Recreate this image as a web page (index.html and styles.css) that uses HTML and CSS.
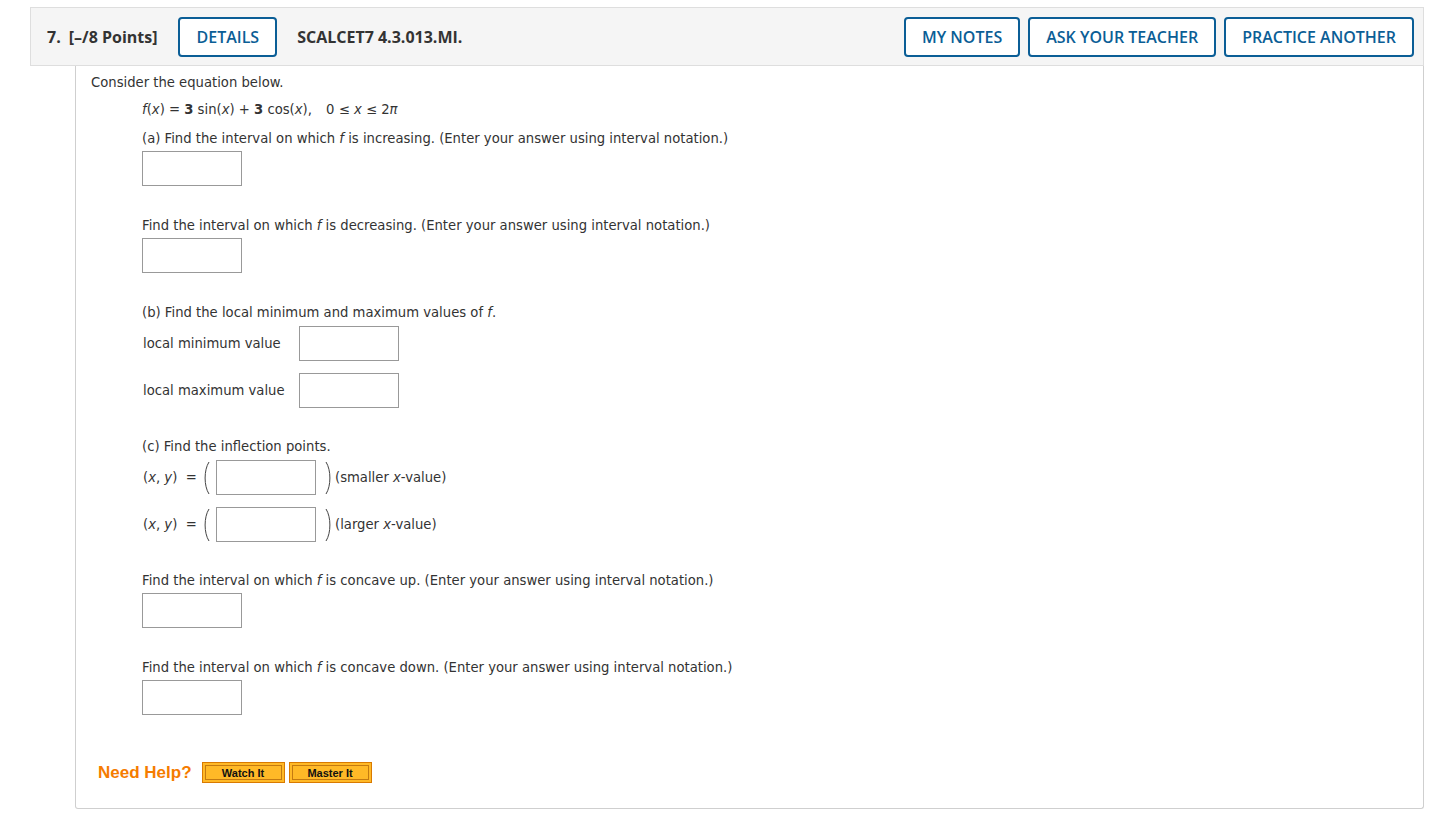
FILE: index.html
```html
<!DOCTYPE html>
<html>
<head>
<meta charset="utf-8">
<link rel="stylesheet" href="styles.css">
</head>
<body>
<div class="page">
  <div class="qhead">
    <div class="qleft">
      <span class="qnum">7.</span>
      <span class="qpts">[–/8 Points]</span>
      <button class="hbtn">DETAILS</button>
      <span class="qcode">SCALCET7 4.3.013.MI.</span>
    </div>
    <div class="qright">
      <button class="hbtn">MY NOTES</button>
      <button class="hbtn">ASK YOUR TEACHER</button>
      <button class="hbtn">PRACTICE ANOTHER</button>
    </div>
  </div>
  <div class="qbody">
    <p class="line first">Consider the equation below.</p>
    <div class="indent">
      <p class="line eq"><i>f</i>(<i>x</i>) = <b>3</b> sin(<i>x</i>) + <b>3</b> cos(<i>x</i>), <span class="range">0 ≤ <i>x</i> ≤ 2<i>π</i></span></p>
      <p class="line sec">(a) Find the interval on which <i>f</i> is increasing. (Enter your answer using interval notation.)</p>
      <div class="ans"></div>
      <p class="line gap">Find the interval on which <i>f</i> is decreasing. (Enter your answer using interval notation.)</p>
      <div class="ans"></div>
      <p class="line gap">(b) Find the local minimum and maximum values of <i>f</i>.</p>
      <div class="row r1"><span class="lbl">local minimum value</span><div class="ans"></div></div>
      <div class="row r2"><span class="lbl">local maximum value</span><div class="ans"></div></div>
      <p class="line gap2">(c) Find the inflection points.</p>
      <div class="row r1">
        <span class="xy">(<i>x</i>, <i>y</i>)&nbsp; =</span>
        <svg class="paren lp" width="7" height="34" viewBox="0 0 7 34"><path d="M6 1 C0.8 9 0.8 25 6 33" fill="none" stroke="#444" stroke-width="1"/></svg>
        <div class="ans"></div>
        <svg class="paren rp" width="7" height="34" viewBox="0 0 7 34"><path d="M1 1 C6.2 9 6.2 25 1 33" fill="none" stroke="#444" stroke-width="1"/></svg>
        <span class="note">(smaller <i>x</i>-value)</span>
      </div>
      <div class="row r2">
        <span class="xy">(<i>x</i>, <i>y</i>)&nbsp; =</span>
        <svg class="paren lp" width="7" height="34" viewBox="0 0 7 34"><path d="M6 1 C0.8 9 0.8 25 6 33" fill="none" stroke="#444" stroke-width="1"/></svg>
        <div class="ans"></div>
        <svg class="paren rp" width="7" height="34" viewBox="0 0 7 34"><path d="M1 1 C6.2 9 6.2 25 1 33" fill="none" stroke="#444" stroke-width="1"/></svg>
        <span class="note">(larger <i>x</i>-value)</span>
      </div>
      <p class="line gap2">Find the interval on which <i>f</i> is concave up. (Enter your answer using interval notation.)</p>
      <div class="ans"></div>
      <p class="line gap">Find the interval on which <i>f</i> is concave down. (Enter your answer using interval notation.)</p>
      <div class="ans"></div>
    </div>
    <div class="help">
      <span class="needhelp">Need Help?</span>
      <button class="hlp">Watch It</button>
      <button class="hlp">Master It</button>
    </div>
  </div>
</div>
</body>
</html>
```

FILE: styles.css
```css
html, body {
  margin: 0;
  padding: 0;
  background: #fff;
}
.page {
  padding: 7px 16px 0 30px;
}
.qhead {
  display: flex;
  justify-content: space-between;
  align-items: center;
  height: 57px;
  padding: 0 9px 0 16px;
  background: #f5f5f5;
  border: 1px solid #dedede;
  font-family: "Open Sans", sans-serif;
  font-weight: 700;
  font-size: 16px;
  color: #333;
}
.qleft, .qright {
  display: flex;
  align-items: center;
}
.qnum {
  margin-right: 8px;
}
.qpts {
  margin-right: 21px;
}
.qcode {
  margin-left: 20px;
}
.hbtn {
  height: 40px;
  padding: 0 16px;
  background: #fff;
  border: 2px solid #0b5e96;
  border-radius: 4px;
  color: #0b5e96;
  font-family: "Open Sans", sans-serif;
  font-weight: 600;
  font-size: 16px;
  cursor: pointer;
}
.qright .hbtn {
  margin-left: 8px;
}
.qright .hbtn:first-child {
  margin-left: 0;
}
.qbody {
  margin-left: 45px;
  height: 743px;
  box-sizing: border-box;
  border: 1px solid #cfcfcf;
  border-top: none;
  border-radius: 0 0 3px 3px;
  padding: 9px 16px 0 15px;
  font-family: "DejaVu Sans", Verdana, sans-serif;
  font-size: 13.2px;
  color: #333;
}
.line {
  margin: 0;
  line-height: 16px;
  height: 16px;
  white-space: nowrap;
}
.indent {
  padding-left: 51px;
}
.eq {
  margin-top: 11px;
}
.range {
  margin-left: 10px;
}
.sec {
  margin-top: 13px;
}
.ans {
  width: 98px;
  height: 33px;
  border: 1px solid #999;
  background: #fff;
  margin-top: 4px;
}
.gap {
  margin-top: 32px;
}
.gap2 {
  margin-top: 31px;
}
.row {
  display: flex;
  align-items: center;
  height: 35px;
}
.row .ans {
  margin-top: 0;
}
.r1 {
  margin-top: 5px;
}
.r2 {
  margin-top: 12px;
}
.lbl {
  width: 156px;
  padding-left: 1px;
}
.xy {
  width: 60px;
  padding-left: 1px;
}
.paren {
  display: block;
}
.lp {
  margin-right: 6px;
}
.rp {
  margin-left: 9px;
}
.note {
  margin-left: 3px;
}
.help {
  display: flex;
  align-items: center;
  margin-top: 47px;
  padding-left: 7px;
}
.needhelp {
  font-family: "Liberation Sans", Arial, sans-serif;
  font-weight: bold;
  font-size: 17px;
  color: #f57c00;
  margin-right: 10px;
}
.hlp {
  width: 83px;
  height: 21px;
  margin-right: 4px;
  padding: 0;
  background: #ffb927;
  border: 1px solid #d97a00;
  box-shadow: inset 0 0 0 2px #ffb927, inset 0 0 0 3px #c47a10;
  font-family: "Liberation Sans", Arial, sans-serif;
  font-weight: bold;
  font-size: 11px;
  color: #111;
  cursor: pointer;
}
```
